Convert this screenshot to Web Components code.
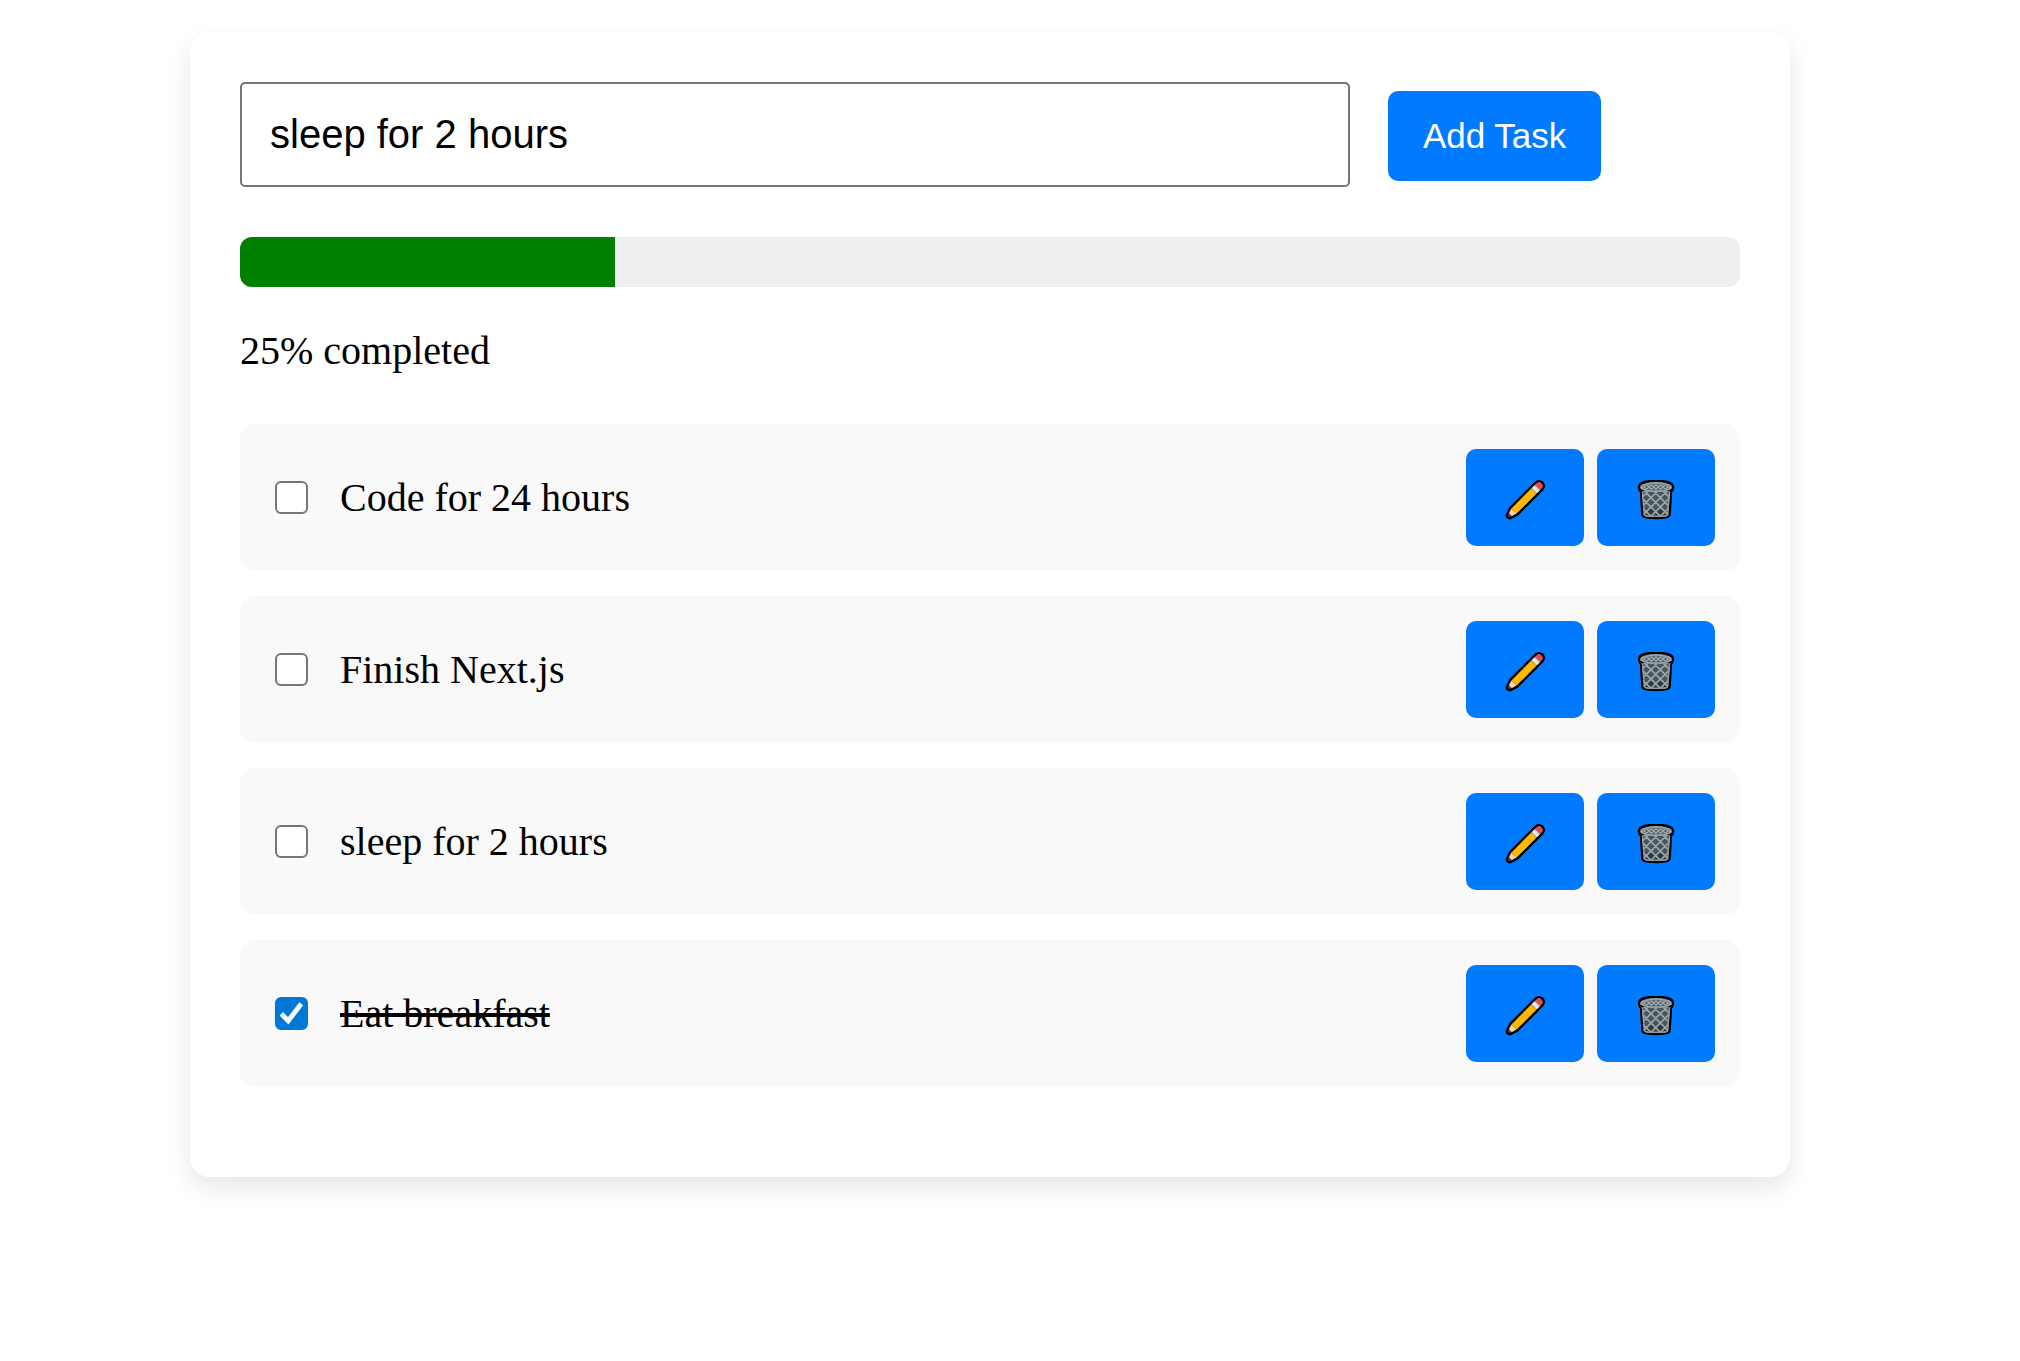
<!DOCTYPE html>
<html lang="en">
<head>
<meta charset="utf-8">
<meta name="viewport" content="width=device-width, initial-scale=1">
<title>To-do list</title>
<style>
  body {
    margin: 0;
    padding: 32px 40px 32px 0;
    background: #fff;
    color: #000;
    font: 40px/47px "Liberation Serif", "Times New Roman", serif;
  }
</style>
</head>
<body>
<todo-card>
  <task-form value="sleep for 2 hours">Add Task</task-form>
  <progress-meter value="25"></progress-meter>
  <task-list>
    <task-item>Code for 24 hours</task-item>
    <task-item>Finish Next.js</task-item>
    <task-item>sleep for 2 hours</task-item>
    <task-item done>Eat breakfast</task-item>
  </task-list>
</todo-card>

<template id="todo-card">
  <style>
    :host {
      display: block;
      box-sizing: border-box;
      max-width: 1600px;
      margin: 0 auto;
      padding: 50px 50px 90px;
      border-radius: 20px;
      background: #fff;
      box-shadow: 0 10px 25px rgba(0, 0, 0, .1);
    }
  </style>
  <slot></slot>
</template>

<template id="task-form">
  <style>
    :host { display: block; margin-bottom: 50px; }
    form { display: flex; align-items: baseline; gap: 38px; margin: 0; }
    input {
      box-sizing: border-box;
      width: 74%;
      height: 105px;
      margin: 0;
      padding: 0 28px;
      border: 2px solid #767676;
      border-radius: 5px;
      background: #fff;
      color: #000;
      font: 40px "Liberation Sans", Arial, sans-serif;
    }
    button {
      height: 90px;
      margin: 0;
      padding: 0 35px;
      border: 0;
      border-radius: 10px;
      background: #007bff;
      color: #fff;
      font: 35px "Liberation Sans", Arial, sans-serif;
      white-space: nowrap;
      cursor: pointer;
    }
  </style>
  <form>
    <input type="text" aria-label="Task">
    <button type="button"><slot></slot></button>
  </form>
</template>

<template id="progress-meter">
  <style>
    :host { display: block; margin-bottom: 50px; }
    .track { height: 50px; border-radius: 12px; background: #eee; overflow: hidden; }
    .fill { height: 100%; background: green; }
    p { margin: 40px 0 0; }
  </style>
  <div class="track" role="progressbar" aria-valuemin="0" aria-valuemax="100"><div class="fill"></div></div>
  <p></p>
</template>

<template id="task-list">
  <style>
    :host { display: flex; flex-direction: column; gap: 25px; }
  </style>
  <slot></slot>
</template>

<template id="task-item">
  <style>
    :host {
      display: flex;
      align-items: center;
      padding: 25px;
      border-radius: 15px;
      background: #f9f9f9;
    }
    .check { display: grid; margin: 0 32px 0 10px; }
    .check > * { grid-area: 1 / 1; }
    input {
      appearance: none;
      box-sizing: border-box;
      width: 33px;
      height: 33px;
      margin: 0;
      border: 2px solid #767676;
      border-radius: 6px;
      background: #fff;
    }
    input:checked { border-color: #0078d7; background: #0078d7; }
    .check svg { width: 33px; height: 33px; pointer-events: none; visibility: hidden; }
    input:checked + svg { visibility: visible; }
    label { flex: 1; }
    :host([done]) label { text-decoration: line-through 4px; }
    .actions { display: flex; gap: 13px; }
  </style>
  <span class="check">
    <input type="checkbox" id="done">
    <svg viewBox="0 0 33 33" aria-hidden="true"><path d="M6.3 16.8 13.2 23.8 26.3 6.8" fill="none" stroke="#fff" stroke-width="4.8"/></svg>
  </span>
  <label for="done"><slot></slot></label>
  <div class="actions">
    <icon-button icon="pencil" label="Edit"></icon-button>
    <icon-button icon="trash" label="Delete"></icon-button>
  </div>
</template>

<template id="icon-button">
  <style>
    :host { display: block; }
    button {
      display: block;
      margin: 0;
      padding: 31px 39px 26px;
      border: 0;
      border-radius: 10px;
      background: #007bff;
      cursor: pointer;
    }
    svg { display: none; width: 40px; height: 40px; }
    :host([icon="pencil"]) .pencil, :host([icon="trash"]) .trash { display: block; }
  </style>
  <button type="button">
    <svg class="pencil" viewBox="0 0 120 120" aria-hidden="true">
      <g transform="translate(102 18) rotate(135)">
        <path d="M0-11H107L128-4Q132 0 128 4L107 11H0A11 11 0 0 1 0-11Z" fill="#000" stroke="#000" stroke-width="14" stroke-linejoin="round"/>
        <path d="M6-11H0A11 11 0 0 0 0 11H6Z" fill="#e74856"/>
        <path d="M6-11H22V11H6Z" fill="#d0d0d0"/>
        <path d="M12-11H17V11H12Z" fill="#f0f0f0"/>
        <path d="M22-11H106V11H22Z" fill="#ffb900"/>
        <path d="M106-11 122-6V6L106 11Z" fill="#f3d5c2"/>
        <path d="M122-6 129-3V3L122 6Z" fill="#4a4a4a"/>
      </g>
    </svg>
    <svg class="trash" viewBox="0 0 120 120" aria-hidden="true">
      <defs>
        <clipPath id="body"><path d="M17 33 23 104Q24 109 32 110Q60 114 88 110Q96 109 97 104L103 33Z"/></clipPath>
        <clipPath id="mouth"><ellipse cx="60" cy="22" rx="39" ry="9"/></clipPath>
      </defs>
      <path d="M13 20C13 2 107 2 107 20Q107 29 101 34L97 103Q96 107 88 108Q60 112 32 108Q24 107 23 103L19 34Q13 29 13 20Z" fill="#000" stroke="#000" stroke-width="15" stroke-linejoin="round"/>
      <g clip-path="url(#body)">
        <path d="M10 20H110V116H10Z" fill="#4a5459"/>
        <path d="M26 88H94V104H26Z" fill="#30363b"/>
        <path d="M-72 20 24 116M-44 20 52 116M-16 20 80 116M12 20 108 116M40 20 136 116M68 20 164 116M96 20 192 116M190 20 94 116M162 20 66 116M134 20 38 116M106 20 10 116M78 20-18 116M50 20-46 116M22 20-74 116" stroke="#9ba9ae" stroke-width="5" fill="none"/>
        <path d="M17 33 23 104Q24 109 32 110Q60 114 88 110Q96 109 97 104L103 33" fill="none" stroke="#8c999e" stroke-width="9"/>
      </g>
      <ellipse cx="60" cy="22" rx="48" ry="15" fill="#84939a"/>
      <ellipse cx="60" cy="21" rx="44" ry="12" fill="none" stroke="#9aa8ad" stroke-width="4"/>
      <g clip-path="url(#mouth)">
        <path d="M20 10H100V32H20Z" fill="#4a5459"/>
        <path d="M18 14 32 28 46 14 60 28 74 14 88 28 102 14M18 28 32 14 46 28 60 14 74 28 88 14 102 28" fill="none" stroke="#9ba9ae" stroke-width="4"/>
      </g>
    </svg>
  </button>
</template>

<script>
  class TemplateElement extends HTMLElement {
    constructor() {
      super();
      const template = document.getElementById(this.localName);
      this.attachShadow({ mode: "open" }).append(template.content.cloneNode(true));
    }
    part$(selector) { return this.shadowRoot.querySelector(selector); }
  }

  class TodoCard extends TemplateElement {}

  class TaskForm extends TemplateElement {
    connectedCallback() {
      this.part$("input").value = this.getAttribute("value") || "";
    }
  }

  class ProgressMeter extends TemplateElement {
    connectedCallback() {
      const value = this.getAttribute("value") || "0";
      this.part$(".track").setAttribute("aria-valuenow", value);
      this.part$(".fill").style.width = value + "%";
      this.part$("p").textContent = value + "% completed";
    }
  }

  class TaskList extends TemplateElement {
    connectedCallback() { this.setAttribute("role", "list"); }
  }

  class TaskItem extends TemplateElement {
    connectedCallback() {
      this.setAttribute("role", "listitem");
      const box = this.part$("input");
      box.checked = this.hasAttribute("done");
      box.addEventListener("change", () => this.toggleAttribute("done", box.checked));
    }
  }

  class IconButton extends TemplateElement {
    connectedCallback() {
      this.part$("button").setAttribute("aria-label", this.getAttribute("label"));
    }
  }

  customElements.define("todo-card", TodoCard);
  customElements.define("task-form", TaskForm);
  customElements.define("progress-meter", ProgressMeter);
  customElements.define("task-list", TaskList);
  customElements.define("icon-button", IconButton);
  customElements.define("task-item", TaskItem);
</script>
</body>
</html>
